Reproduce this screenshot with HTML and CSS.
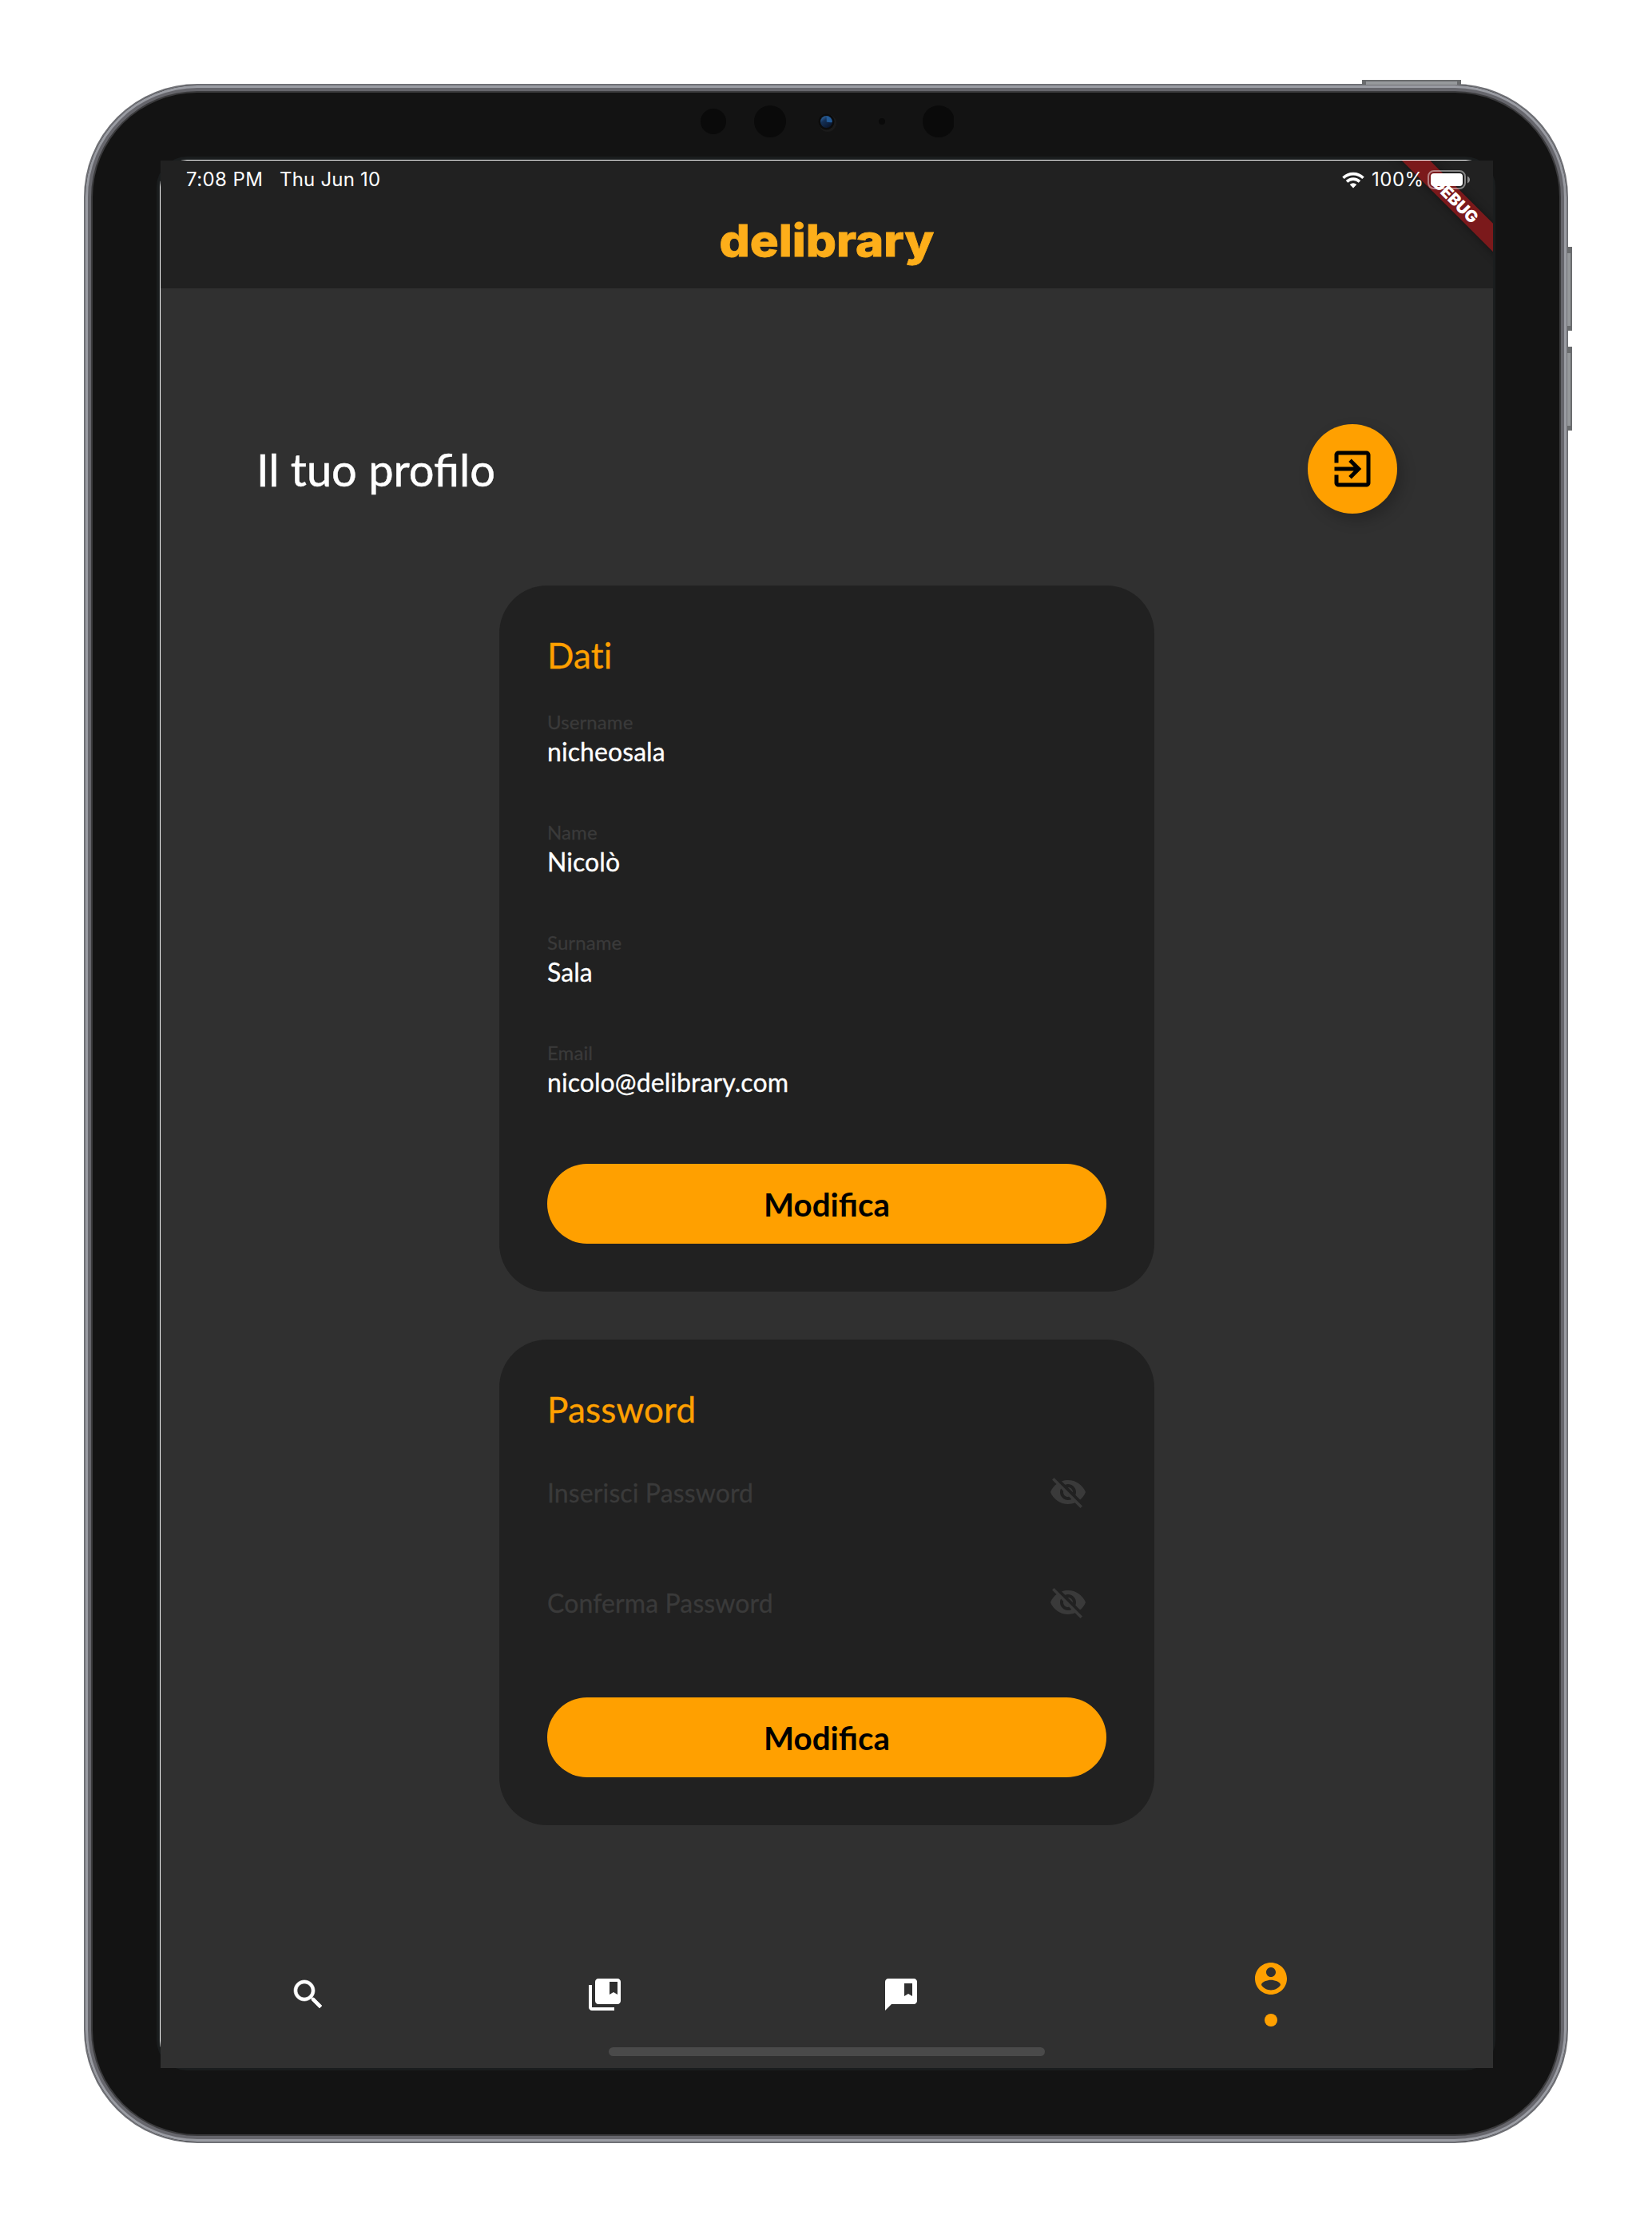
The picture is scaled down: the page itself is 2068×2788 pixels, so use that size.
FILE: index.html
```html
<!DOCTYPE html>
<html lang="it">
<head>
<meta charset="utf-8">
<title>delibrary</title>
<link rel="stylesheet" href="styles.css">
</head>
<body>
<div class="device">
  <span class="key key-power"></span>
  <span class="key key-up"></span>
  <span class="key key-down"></span>
  <svg class="sensors" width="320" height="48" viewBox="0 0 320 48">
    <defs>
      <linearGradient id="lens" x1="0" y1="0.2" x2="0.6" y2="1">
        <stop offset="0" stop-color="#2f66a0"/>
        <stop offset="0.35" stop-color="#143056"/>
        <stop offset="1" stop-color="#0b1830"/>
      </linearGradient>
    </defs>
    <g fill="#0a0a0a">
      <circle cx="19" cy="24" r="16"/>
      <circle cx="90" cy="24" r="20"/>
      <circle cx="230" cy="24" r="4"/>
      <circle cx="301" cy="24" r="20"/>
    </g>
    <circle cx="162" cy="26" r="11" fill="#1b1b1b"/>
    <circle cx="160.5" cy="24.500" r="10" fill="#0c0c0c"/>
    <circle cx="160.500" cy="24.500" r="7.500" fill="url(#lens)"/>
    <path d="M160.500 17.200a7.400 7.400 0 0 1 7.300 7.800c-3 .6-5-.4-7-.2z" fill="#225a96"/>
  </svg>
  <div class="glass">
    <div class="screen">
      <div class="banner"><span>DEBUG</span></div>
      <header class="appbar">
        <div class="status">
          <span class="time">7:08 PM</span>
          <span class="date">Thu Jun 10</span>
          <svg class="wifi" width="28" height="21" viewBox="0 0 28 21" fill="none" stroke="#fff" stroke-width="3.600">
            <path d="M1.500 7.800a17.800 17.800 0 0 1 25 0"/>
            <path d="M6 12.400a11.400 11.400 0 0 1 16 0"/>
            <path d="M14 20.400l-4.300-4.400a6.200 6.200 0 0 1 8.600 0z" fill="#fff" stroke="none"/>
          </svg>
          <span class="percent">100%</span>
          <svg class="battery" width="54" height="24" viewBox="0 0 54 24">
            <rect x="1" y="1" width="46" height="22" rx="7" fill="none" stroke="#fff" stroke-opacity=".45" stroke-width="2"/>
            <rect x="4" y="4" width="40" height="16" rx="4" fill="#fff"/>
            <path d="M50 7.500c4 2 4 7 0 9z" fill="#fff" fill-opacity=".5"/>
          </svg>
        </div>
        <h1 class="logo">delibrary</h1>
      </header>
      <main class="content">
        <div class="heading">
          <h2 class="title">Il tuo profilo</h2>
          <button class="fab" aria-label="Esci">
            <svg width="60" height="60" viewBox="0 0 24 24"><path d="M10.090 15.590L11.500 17l5-5-5-5-1.410 1.410L12.670 11H3v2h9.670l-2.580 2.590zM19 3H5c-1.110 0-2 .9-2 2v4h2V5h14v14H5v-4H3v4c0 1.100.89 2 2 2h14c1.100 0 2-.9 2-2V5c0-1.100-.9-2-2-2z"/></svg>
          </button>
        </div>
        <section class="card">
          <h3 class="card-title">Dati</h3>
          <div class="field"><span class="label">Username</span><span class="value">nicheosala</span></div>
          <div class="field"><span class="label">Name</span><span class="value">Nicolò</span></div>
          <div class="field"><span class="label">Surname</span><span class="value">Sala</span></div>
          <div class="field"><span class="label">Email</span><span class="value">nicolo@delibrary.com</span></div>
          <button class="submit">Modifica</button>
        </section>
        <section class="card">
          <h3 class="card-title">Password</h3>
          <div class="field secret">
            <span class="hint">Inserisci Password</span>
            <svg class="eye" width="48" height="48" viewBox="0 0 24 24"><path d="M12 7c2.760 0 5 2.240 5 5 0 .65-.13 1.260-.36 1.830l2.920 2.920c1.510-1.260 2.700-2.890 3.430-4.750-1.730-4.390-6-7.500-11-7.500-1.400 0-2.740.25-3.980.7l2.160 2.160C10.740 7.130 11.350 7 12 7zM2 4.270l2.280 2.280.46.46C3.080 8.300 1.780 10.020 1 12c1.730 4.390 6 7.500 11 7.500 1.550 0 3.030-.3 4.380-.84l.42.42L19.730 22 21 20.730 3.270 3 2 4.270zM7.530 9.800l1.550 1.550c-.05.21-.08.43-.08.65 0 1.660 1.340 3 3 3 .22 0 .44-.03.65-.08l1.550 1.550c-.67.33-1.410.53-2.200.53-2.760 0-5-2.240-5-5 0-.79.2-1.530.53-2.200zm4.310-.78l3.150 3.150.02-.16c0-1.660-1.340-3-3-3l-.17.01z"/></svg>
          </div>
          <div class="field secret">
            <span class="hint">Conferma Password</span>
            <svg class="eye" width="48" height="48" viewBox="0 0 24 24"><path d="M12 7c2.760 0 5 2.240 5 5 0 .65-.13 1.260-.36 1.830l2.920 2.920c1.510-1.260 2.700-2.890 3.430-4.750-1.730-4.390-6-7.500-11-7.500-1.400 0-2.740.25-3.980.7l2.160 2.160C10.740 7.130 11.350 7 12 7zM2 4.270l2.280 2.280.46.46C3.080 8.300 1.780 10.020 1 12c1.730 4.390 6 7.500 11 7.500 1.550 0 3.030-.3 4.380-.84l.42.42L19.730 22 21 20.730 3.270 3 2 4.270zM7.530 9.800l1.550 1.550c-.05.21-.08.43-.08.65 0 1.660 1.340 3 3 3 .22 0 .44-.03.65-.08l1.550 1.550c-.67.33-1.410.53-2.200.53-2.760 0-5-2.240-5-5 0-.79.2-1.530.53-2.200zm4.310-.78l3.150 3.150.02-.16c0-1.660-1.340-3-3-3l-.17.01z"/></svg>
          </div>
          <button class="submit">Modifica</button>
        </section>
      </main>
      <nav class="tabs">
        <a class="tab"><svg width="48" height="48" viewBox="0 0 24 24" stroke="#fff" stroke-width=".3"><path d="M15.500 14h-.79l-.28-.27C15.410 12.590 16 11.110 16 9.500 16 5.910 13.090 3 9.500 3S3 5.910 3 9.500 5.910 16 9.500 16c1.610 0 3.090-.59 4.230-1.570l.27.28v.79l5 4.990L20.490 19l-4.990-5zm-6 0C7.010 14 5 11.990 5 9.500S7.010 5 9.500 5 14 7.010 14 9.500 11.990 14 9.500 14z"/></svg></a>
        <a class="tab"><svg width="48" height="48" viewBox="0 0 24 24"><path d="M4 6H2v14c0 1.100.9 2 2 2h14v-2H4V6z"/><path d="M20 2H8c-1.100 0-2 .9-2 2v12c0 1.100.9 2 2 2h12c1.100 0 2-.9 2-2V4c0-1.100-.9-2-2-2zm0 10l-2.500-1.500L15 12V4h5v8z"/></svg></a>
        <a class="tab"><svg width="48" height="48" viewBox="0 0 24 24"><path d="M20 2H4c-1.100 0-2 .9-2 2v18l4-4h14c1.100 0 2-.9 2-2V4c0-1.100-.9-2-2-2zm-1 11l-2.500-1.500L14 13V5h5v8z"/></svg></a>
        <a class="tab active"><svg width="48" height="48" viewBox="0 0 24 24"><path d="M12 2C6.480 2 2 6.480 2 12s4.480 10 10 10 10-4.480 10-10S17.520 2 12 2zm0 3c1.660 0 3 1.340 3 3s-1.340 3-3 3-3-1.340-3-3 1.340-3 3-3zm0 14.200c-2.500 0-4.710-1.280-6-3.220.03-1.990 4-3.080 6-3.080 1.990 0 5.970 1.090 6 3.080-1.290 1.940-3.500 3.220-6 3.220z"/></svg><span class="dot"></span></a>
      </nav>
      <div class="home"></div>
    </div>
  </div>
</div>
</body>
</html>
```
FILE: styles.css
```css
* { box-sizing: border-box; }

body {
  margin: 0;
  padding: 105px;
  background: #fff;
  font-family: Lato, "Open Sans", sans-serif;
  color: #fff;
}

h1, h2, h3 { margin: 0; font-weight: 400; }
button { border: 0; padding: 0; font-family: inherit; }
svg { display: block; flex: none; }

/* Tablet body */
.device {
  position: relative;
  width: 1858px;
  height: 2578px;
  padding: 89px;
  border: 2px solid #707176;
  border-radius: 142px;
  background: #131313;
  box-shadow: inset 0 0 0 3px #9a9ca3, inset 0 0 0 7px #66666c, inset 0 0 0 9px #3b3b3d;
}

.key {
  position: absolute;
  background: #96999c;
  border: 2px solid #6a6c6e;
}
.key-power { left: 1598px; top: -7px; width: 124px; height: 6px; border-width: 2px 5px 0; }
.key-up, .key-down { left: 1855px; width: 6px; height: 105px; border-width: 8px 2px 6px 0; }
.key-up { top: 202px; }
.key-down { top: 327px; }

.sensors { position: absolute; left: 767px; top: 21px; }

.glass {
  position: relative;
  width: 1676px;
  height: 2396px;
  padding: 5px 3px 3px 5px;
  border-radius: 38px;
  background: #1a1d1e;
}
/* Thin light edge on the top and left of the panel */
.glass::before {
  content: "";
  position: absolute;
  inset: 4px 3px 3px 4px;
  border-radius: 34px;
  background: #fff;
}

.screen {
  position: relative;
  display: flex;
  flex-direction: column;
  width: 1668px;
  height: 2388px;
  overflow: hidden;
  background: #303030;
}

/* Corner ribbon */
.banner {
  position: absolute;
  z-index: 1;
  right: -72px;
  top: 36px;
  width: 240px;
  height: 25px;
  padding-left: 3px;
  transform: rotate(45deg);
  background: #7b191b;
  box-shadow: 0 0 12px rgba(0, 0, 0, .4);
  font: 900 20.4px/25px Inter, sans-serif;
  text-align: center;
}

.appbar { height: 160px; background: #212121; }

.status {
  position: relative;
  z-index: 2;
  display: flex;
  align-items: center;
  height: 48px;
  padding: 0 28px 0 32px;
  font: 400 24px/48px Inter, sans-serif;
}
.time { width: 117px; letter-spacing: .4px; }
.date { margin-right: auto; letter-spacing: .2px; }
.percent { width: 79px; padding-left: 9px; letter-spacing: .5px; }

.logo {
  margin-top: 19px;
  color: #fdae1a;
  font: 800 55px/66px Inter, sans-serif;
  text-align: center;
  transform: scaleX(1.09);
  -webkit-text-stroke: .8px #fdae1a;
}

.content {
  flex: 1;
  display: flex;
  flex-direction: column;
  align-items: center;
  gap: 60px;
  padding: 170px 120px 0;
}

.heading {
  display: flex;
  align-items: center;
  justify-content: space-between;
  width: 100%;
  margin-bottom: 30px;
}
.title { padding-top: 1px; font-size: 56px; line-height: 68px; -webkit-text-stroke: .5px #fff; }

.fab {
  display: grid;
  place-items: center;
  width: 112px;
  height: 112px;
  border-radius: 50%;
  background: #ffa000;
  box-shadow: 6px 8px 18px rgba(0, 0, 0, .22);
}

.card {
  width: 820px;
  padding: 60px;
  border-radius: 60px;
  background: #212121;
}
.card-title {
  margin-bottom: 42px;
  padding-top: 1px;
  color: #ffa000;
  font-size: 44px;
  line-height: 53px;
  letter-spacing: .2px;
  -webkit-text-stroke: .3px #ffa000;
}

.field {
  display: flex;
  flex-direction: column;
  gap: 4px;
  height: 138px;
}
.label { color: #3a3a3a; font-size: 24px; line-height: 29px; letter-spacing: .1px; -webkit-text-stroke: .3px #3a3a3a; }
.value { font-size: 32px; line-height: 38px; letter-spacing: .08px; -webkit-text-stroke: .3px #fff; }

.secret {
  flex-direction: row;
  align-items: flex-start;
  justify-content: space-between;
  padding: 11px 24px 0 0;
}
.hint { color: #3a3a3a; font-size: 32px; line-height: 50px; letter-spacing: .12px; -webkit-text-stroke: .3px #3a3a3a; }
.eye { fill: #3a3a3a; }

.submit {
  display: block;
  width: 700px;
  height: 100px;
  margin-top: 16px;
  padding-top: 1px;
  border-radius: 50px;
  background: #ffa000;
  color: #000;
  font-size: 40.3px;
  font-weight: 700;
  line-height: 99px;
}

.tabs {
  display: flex;
  height: 116px;
  margin-bottom: 12px;
}
.tab { flex: 2; display: flex; flex-direction: column; align-items: center; padding-top: 38px; fill: #fff; }
.tab.active { flex: 3; gap: 20px; padding-top: 18px; fill: #ffa000; }
.dot { width: 16px; height: 16px; border-radius: 50%; background: #ffa000; }

.home {
  width: 546px;
  height: 11px;
  margin: 0 auto 15px;
  border-radius: 6px;
  background: #4a4a4a;
}
```
